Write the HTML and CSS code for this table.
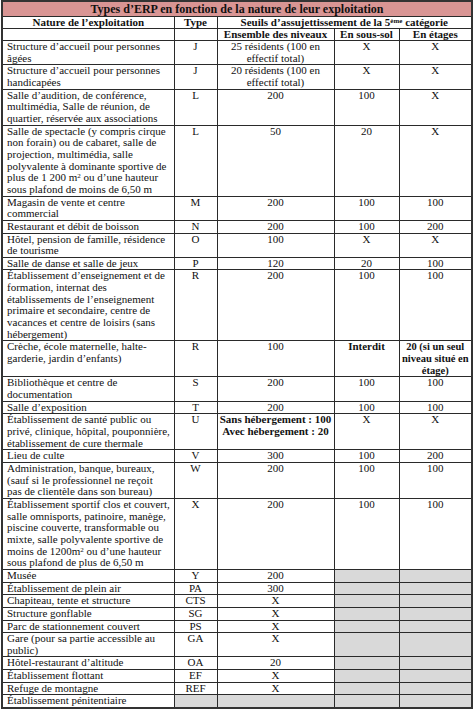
FILE: index.html
```html
<!DOCTYPE html>
<html lang="fr">
<head>
<meta charset="utf-8">
<title>Types d'ERP</title>
<link rel="stylesheet" href="styles.css">
</head>
<body>
<table class="erp">
  <colgroup>
    <col class="c1"><col class="c2"><col class="c3"><col class="c4"><col class="c5">
  </colgroup>
  <tr class="title"><th colspan="5">Types d’ERP en fonction de la nature de leur exploitation</th></tr>
  <tr class="head"><th>Nature de l’exploitation</th><th>Type</th><th colspan="3">Seuils d’assujettissement de la 5<sup>ème</sup> catégorie</th></tr>
  <tr class="head"><th></th><th></th><th>Ensemble des niveaux</th><th>En sous-sol</th><th>En étages</th></tr>
  <tr><td>Structure d’accueil pour personnes<br>âgées</td><td>J</td><td>25 résidents (100 en<br>effectif total)</td><td>X</td><td>X</td></tr>
  <tr><td>Structure d’accueil pour personnes<br>handicapées</td><td>J</td><td>20 résidents (100 en<br>effectif total)</td><td>X</td><td>X</td></tr>
  <tr><td>Salle d’audition, de conférence,<br>multimédia, Salle de réunion, de<br>quartier, réservée aux associations</td><td>L</td><td>200</td><td>100</td><td>X</td></tr>
  <tr><td>Salle de spectacle (y compris cirque<br>non forain) ou de cabaret, salle de<br>projection, multimédia, salle<br>polyvalente à dominante sportive de<br>plus de 1 200 m<sup>2</sup> ou d’une hauteur<br>sous plafond de moins de 6,50 m</td><td>L</td><td>50</td><td>20</td><td>X</td></tr>
  <tr><td>Magasin de vente et centre<br>commercial</td><td>M</td><td>200</td><td>100</td><td>100</td></tr>
  <tr><td>Restaurant et débit de boisson</td><td>N</td><td>200</td><td>100</td><td>200</td></tr>
  <tr><td>Hôtel, pension de famille, résidence<br>de tourisme</td><td>O</td><td>100</td><td>X</td><td>X</td></tr>
  <tr><td>Salle de danse et salle de jeux</td><td>P</td><td>120</td><td>20</td><td>100</td></tr>
  <tr><td>Établissement d’enseignement et de<br>formation, internat des<br>établissements de l’enseignement<br>primaire et secondaire, centre de<br>vacances et centre de loisirs (sans<br>hébergement)</td><td>R</td><td>200</td><td>100</td><td>100</td></tr>
  <tr><td>Crèche, école maternelle, halte-<br>garderie, jardin d’enfants)</td><td>R</td><td>100</td><td class="b">Interdit</td><td class="b sm">20 (si un seul<br>niveau situé en<br>étage)</td></tr>
  <tr><td>Bibliothèque et centre de<br>documentation</td><td>S</td><td>200</td><td>100</td><td>100</td></tr>
  <tr><td>Salle d’exposition</td><td>T</td><td>200</td><td>100</td><td>100</td></tr>
  <tr><td>Établissement de santé public ou<br>privé, clinique, hôpital, pouponnière,<br>établissement de cure thermale</td><td>U</td><td class="b">Sans hébergement : 100<br>Avec hébergement : 20</td><td>X</td><td>X</td></tr>
  <tr><td>Lieu de culte</td><td>V</td><td>300</td><td>100</td><td>200</td></tr>
  <tr><td>Administration, banque, bureaux,<br>(sauf si le professionnel ne reçoit<br>pas de clientèle dans son bureau)</td><td>W</td><td>200</td><td>100</td><td>100</td></tr>
  <tr><td>Établissement sportif clos et couvert,<br>salle omnisports, patinoire, manège,<br>piscine couverte, transformable ou<br>mixte, salle polyvalente sportive de<br>moins de 1200m<sup>2</sup> ou d’une hauteur<br>sous plafond de plus de 6,50 m</td><td>X</td><td>200</td><td>100</td><td>100</td></tr>
  <tr><td>Musée</td><td>Y</td><td>200</td><td class="g"></td><td class="g"></td></tr>
  <tr><td>Établissement de plein air</td><td>PA</td><td>300</td><td class="g"></td><td class="g"></td></tr>
  <tr><td>Chapiteau, tente et structure</td><td>CTS</td><td>X</td><td class="g"></td><td class="g"></td></tr>
  <tr><td>Structure gonflable</td><td>SG</td><td>X</td><td class="g"></td><td class="g"></td></tr>
  <tr><td>Parc de stationnement couvert</td><td>PS</td><td>X</td><td class="g"></td><td class="g"></td></tr>
  <tr><td>Gare (pour sa partie accessible au<br>public)</td><td>GA</td><td>X</td><td class="g"></td><td class="g"></td></tr>
  <tr><td>Hôtel-restaurant d’altitude</td><td>OA</td><td>20</td><td class="g"></td><td class="g"></td></tr>
  <tr><td>Établissement flottant</td><td>EF</td><td>X</td><td class="g"></td><td class="g"></td></tr>
  <tr><td>Refuge de montagne</td><td>REF</td><td>X</td><td class="g"></td><td class="g"></td></tr>
  <tr><td>Établissement pénitentiaire</td><td class="g"></td><td class="g"></td><td class="g"></td><td class="g"></td></tr>
</table>
</body>
</html>
```
FILE: styles.css
```css
html, body {
  margin: 0;
  padding: 0;
  background: #ffffff;
}
body {
  font-family: "Liberation Serif", "Times New Roman", serif;
  font-size: 11px;
  color: #111111;
}
.erp {
  border-collapse: collapse;
  table-layout: fixed;
  width: 470px;
  margin: 0 0 0 1px;
  border: 2px solid #333333;
}
.c1 { width: 172px; }
.c2 { width: 43px; }
.c3 { width: 117px; }
.c4 { width: 65px; }
.c5 { width: 73px; }
.erp th, .erp td {
  border: 1px solid #2a2a2a;
  padding: 0;
  line-height: 11.65px;
  vertical-align: top;
  text-align: center;
  white-space: nowrap;
}
.erp td:first-child {
  text-align: left;
  padding-left: 4px;
}
.erp th {
  font-weight: bold;
}
.title th {
  background: #d99594;
  font-size: 12px;
  height: 13px;
  padding-top: 1px;
  line-height: 13px;
}
.head th {
  line-height: 11px;
}
sup {
  font-size: 7px;
  line-height: 0;
  vertical-align: 3px;
}
.b { font-weight: bold; }
.sm { font-size: 10.5px; }
.g { background: #d9d9d9; }
```
